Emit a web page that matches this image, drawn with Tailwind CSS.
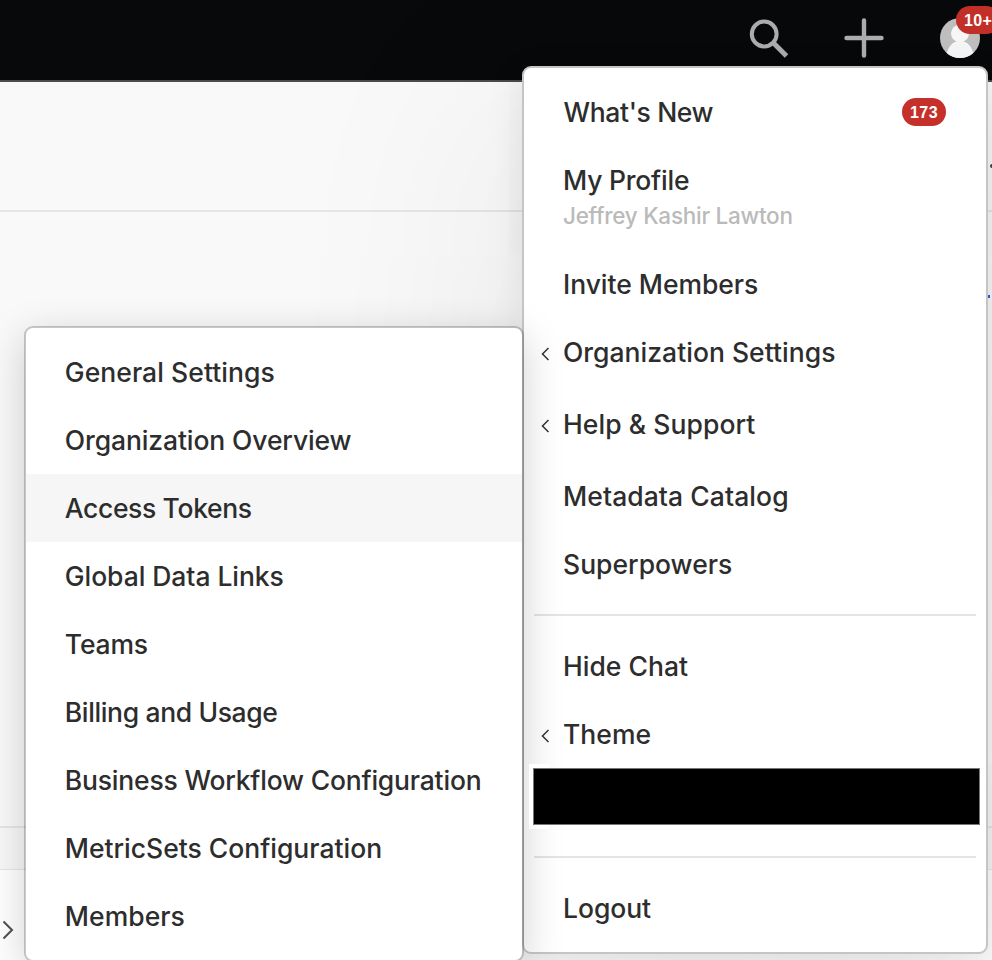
<!DOCTYPE html>
<html lang="en">
<head>
<meta charset="utf-8">
<title>User menu</title>
<script src="https://cdn.jsdelivr.net/npm/@tailwindcss/browser@4"></script>
</head>
<body class="relative w-[992px] h-[960px] overflow-hidden bg-[#f9f9f9] text-[#2d2d2d] font-['Inter','Liberation_Sans',sans-serif]">

<!-- Page behind the menus -->
<div class="flex h-[960px] flex-col">
  <header class="flex h-[82px] shrink-0 items-start justify-end border-b-2 border-[#4b4b4d] bg-[#08090b]">
    <svg class="mt-[17px] mr-[52px]" width="44" height="44" viewBox="0 0 44 44" fill="none" stroke="#b1b1b1"><circle cx="16.2" cy="17" r="12.4" stroke-width="4"/><path d="M25.5 26L38.5 39" stroke-width="5"/></svg>
    <svg class="mt-[18px] mr-[56px]" width="40" height="40" viewBox="0 0 40 40" fill="none" stroke="#b1b1b1" stroke-width="4.4" stroke-linecap="round"><path d="M20 2.500V37.500M2.500 20H37.500"/></svg>
    <div class="relative mt-[18px] mr-[12px] size-10">
      <svg width="40" height="40" viewBox="0 0 40 40"><defs><clipPath id="disc"><circle cx="20" cy="20" r="20"/></clipPath></defs><g clip-path="url(#disc)"><rect width="40" height="40" fill="#c2c2c2"/><circle cx="20" cy="15.500" r="9" fill="#fafafa"/><path d="M6 38C8 28 13 23 20 23S32 28 34 38V40H6Z" fill="#fafafa"/></g></svg>
      <span class="absolute left-4 -top-3 flex h-7 w-[44px] items-center rounded-full bg-[#c5302a] pl-[8px] pt-px font-['Liberation_Sans',sans-serif] text-[16px] font-bold tracking-[0.3px] text-white">10+</span>
    </div>
  </header>
  <section class="relative h-[130px] shrink-0 border-b-2 border-[#e6e6e6]">
    <span class="absolute left-[990px] top-[82px] h-[4px] w-1 rounded-l-full bg-[#444]"></span>
  </section>
  <section class="relative h-[616px] shrink-0 border-b-2 border-[#e6e6e6]">
    <span class="absolute left-[988px] top-[83px] h-[3px] w-[2px] bg-[#2466d6]"></span>
  </section>
  <section class="h-[42px] shrink-0 border-b border-[#e6e6e6] bg-[#f8f8f8]"></section>
  <section class="grow bg-white pt-[48px] pl-[2px]">
    <svg width="14" height="22" viewBox="0 0 14 22" fill="none" stroke="#505050" stroke-width="2"><path d="M1.500 3.500L10 12L1.500 20.500"/></svg>
  </section>
</div>

<!-- User menu -->
<nav class="absolute left-[522px] top-[66px] flex h-[888px] w-[466px] flex-col rounded-[9px] border-2 border-[#c5c5c5] bg-white pt-[10px] text-[26.5px] font-medium shadow-[0_10px_40px_rgba(0,0,0,0.08),0_40px_240px_rgba(0,0,0,0.11)]">
  <a class="flex h-[68px] items-center justify-between pl-[39.5px] pr-10"><span class="pt-0.5 tracking-[-0.36px]">What's New</span><span class="flex h-7 w-11 items-center justify-center rounded-full bg-[#c5302a] pt-px font-['Liberation_Sans',sans-serif] text-[16px] font-bold tracking-[0.4px] text-white">173</span></a>
  <a class="flex h-[104px] flex-col pl-[39px] pt-[16px]"><span class="leading-[36px] tracking-[-0.22px]">My Profile</span><span class="text-[22.5px] leading-[36px] tracking-[-0.27px] text-[#bababa]">Jeffrey Kashir Lawton</span></a>
  <a class="flex h-[68px] items-center pl-[39px] pt-0.5 tracking-[-0.04px]">Invite Members</a>
  <a class="flex h-[72px] items-center pb-0.5"><svg class="ml-[17px] mr-[14px] mt-0.5" width="8" height="14" viewBox="0 0 8 14" fill="none" stroke="#333" stroke-width="1.5"><path d="M7.500 1L1.500 7L7.500 13"/></svg><span class="tracking-[0.02px]">Organization Settings</span></a>
  <a class="flex h-[72px] items-center pb-0.5"><svg class="ml-[17px] mr-[14px] mt-0.5" width="8" height="14" viewBox="0 0 8 14" fill="none" stroke="#333" stroke-width="1.5"><path d="M7.500 1L1.500 7L7.500 13"/></svg><span class="tracking-[0.08px]">Help &amp; Support</span></a>
  <a class="flex h-[68px] items-center pl-[39px] pt-0.5 tracking-[0.08px]">Metadata Catalog</a>
  <a class="flex h-[68px] items-center pl-[39px] pt-0.5 tracking-[0.01px]">Superpowers</a>
  <hr class="mx-[10px] my-4 border-t-2 border-[#e4e4e4]">
  <a class="flex h-[68px] items-center pl-[39px] pt-0.5 tracking-[0.02px]">Hide Chat</a>
  <a class="flex h-[68px] items-center pt-0.5"><svg class="ml-[17px] mr-[14px] mt-0.5" width="8" height="14" viewBox="0 0 8 14" fill="none" stroke="#333" stroke-width="1.5"><path d="M7.500 1L1.500 7L7.500 13"/></svg><span class="tracking-[0.05px]">Theme</span></a>
  <div class="ml-[9px] h-[57px] w-[447px] border border-[#777] bg-black"></div>
  <hr class="mx-[10px] mt-[31px] mb-4 border-t-2 border-[#e4e4e4]">
  <a class="flex h-[68px] items-center pl-[39px] pt-0.5 tracking-[-0.05px]">Logout</a>
</nav>

<!-- Organization settings submenu -->
<nav class="absolute left-[24px] top-[326px] flex h-[636px] w-[500px] flex-col rounded-[9px] border-2 border-black/20 bg-white bg-clip-padding pt-[10px] text-[26.5px] font-medium shadow-[0_10px_40px_rgba(0,0,0,0.18)] *:flex *:h-[68px] *:shrink-0 *:items-center *:pl-[38.8px] *:pt-0.5">
  <a class="tracking-[0.06px]">General Settings</a>
  <a class="tracking-[-0.11px]">Organization Overview</a>
  <a class="bg-[#f6f6f6] tracking-[-0.36px]">Access Tokens</a>
  <a class="tracking-[-0.06px]">Global Data Links</a>
  <a class="tracking-[-0.15px]">Teams</a>
  <a class="tracking-[-0.36px]">Billing and Usage</a>
  <a class="tracking-[-0.2px]">Business Workflow Configuration</a>
  <a class="tracking-[-0.01px]">MetricSets Configuration</a>
  <a class="tracking-[0.05px]">Members</a>
</nav>
<!-- Left end of the redacted row, above the submenu's shadow -->
<div class="absolute left-[529px] top-[764px] h-[65px] w-[20px] bg-white py-1 pl-1"><div class="h-[57px] border border-r-0 border-[#777] bg-black"></div></div>
</body>
</html>
